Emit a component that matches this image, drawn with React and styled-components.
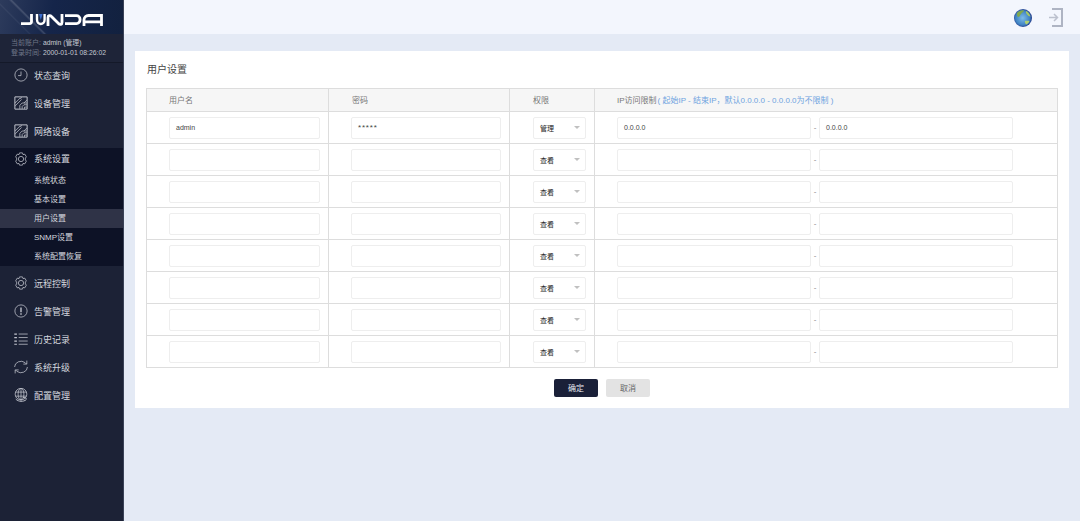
import React from "react";
import styled, { createGlobalStyle } from "styled-components";

const GlobalStyle = createGlobalStyle`
  html, body {
    margin: 0;
    padding: 0;
    height: 100%;
  }
  body {
    font-family: "Liberation Sans", "Noto Sans CJK SC", sans-serif;
    background: #e4eaf5;
  }
  * {
    box-sizing: border-box;
  }
`;

const Page = styled.div`
  display: flex;
  width: 1080px;
  height: 521px;
  overflow: hidden;
`;

const Sidebar = styled.aside`
  width: 124px;
  flex: none;
  background: #1c2236;
  border-right: 1px solid #3a4257;
  display: flex;
  flex-direction: column;
`;

const LogoBar = styled.div`
  height: 34px;
  padding: 6px 0 0 1px;
  display: flex;
  align-items: center;
  justify-content: center;
  background:
    linear-gradient(45deg, transparent 0 27%, rgba(255, 255, 255, 0.16) 28.500%, transparent 30%),
    linear-gradient(45deg, transparent 0 18%, rgba(255, 255, 255, 0.06) 19%, transparent 20%),
    linear-gradient(100deg, #2d3b5c 0%, #15254a 42%, #12213f 100%);
`;

const Account = styled.div`
  height: 29px;
  padding: 4px 0 0 11px;
  font-size: 7px;
  line-height: 10px;
  color: #6f7688;
  border-bottom: 1px solid #141929;
  background: #1e2438;

  b {
    font-size: 6.800px;
    font-weight: 400;
    color: #c4c8d2;
  }
`;

const MenuItem = styled.div`
  height: 24px;
  margin-bottom: 4px;
  display: flex;
  align-items: center;
  padding-left: 14px;
  gap: 6px;
  font-size: 9px;
  color: #d5d8df;

  svg {
    flex: none;
    width: 14px;
    height: 14px;
  }
`;

const Group = styled.div`
  margin: 1px 0 5px;
  background: #0d1226;
`;

const GroupTitle = styled(MenuItem)`
  height: 23px;
  margin-bottom: 0;
  padding-bottom: 2px;
`;

const SubItem = styled.div`
  height: 19px;
  padding: 0 0 2px 34px;
  display: flex;
  align-items: center;
  font-size: 8px;
  color: #d5d8df;
  background: ${(p) => (p.$active ? "#2f3347" : "transparent")};
`;

const Main = styled.main`
  flex: 1;
  min-width: 0;
  display: flex;
  flex-direction: column;
`;

const TopBar = styled.header`
  height: 34px;
  background: #f3f6fd;
  display: flex;
  align-items: center;
  justify-content: flex-end;
  gap: 17px;
  padding: 1px 17px 0 0;
`;

const Card = styled.section`
  margin: 17px 11px 0;
  height: 357px;
  background: #fff;
  padding: 12px 11px 0;
`;

const Title = styled.h2`
  margin: 0;
  height: 25px;
  padding-left: 1px;
  font-size: 10px;
  line-height: 14px;
  font-weight: 400;
  color: #444;
`;

const Table = styled.div`
  border: 1px solid #ddd;
  border-bottom: 0;
  width: 912px;
`;

const Row = styled.div`
  display: grid;
  grid-template-columns: 182px 181px 85px 1fr;
  height: 32px;
  border-bottom: 1px solid #ddd;
`;

const HeadRow = styled(Row)`
  height: 23px;
  background: #f6f6f6;
`;

const HeadCell = styled.div`
  display: flex;
  align-items: center;
  padding: 0 0 2px ${(p) => p.$indent}px;
  font-size: 8px;
  color: #777;
  border-right: ${(p) => (p.$last ? "0" : "1px solid #ddd")};
`;

const Hint = styled.span`
  color: #6ea3e0;
  margin-left: 1px;
`;

const Cell = styled.div`
  display: flex;
  align-items: center;
  padding-left: ${(p) => p.$indent}px;
  border-right: ${(p) => (p.$last ? "0" : "1px solid #ddd")};
`;

const Field = styled.div`
  width: ${(p) => p.$width}px;
  height: 22px;
  border: 1px solid #eeeeee;
  border-radius: 2px;
  background: #fff;
  display: flex;
  align-items: center;
  padding-left: 6px;
  font-size: 7px;
  color: #444;
`;

const PasswordField = styled(Field)`
  font-size: 8px;
  letter-spacing: 0.800px;
`;

const SelectBox = styled(Field)`
  justify-content: space-between;
  padding-right: 5px;
  color: #222;

  &::after {
    content: "";
    border-left: 3px solid transparent;
    border-right: 3px solid transparent;
    border-top: 3px solid #c0c0c0;
  }
`;

const Dash = styled.span`
  width: 8px;
  text-align: center;
  font-size: 8px;
  color: #888;
`;

const Actions = styled.div`
  display: flex;
  justify-content: center;
  gap: 8px;
  margin-top: 11px;
`;

const Button = styled.button`
  width: 44px;
  height: 18px;
  padding: 0 0 2px;
  border: 0;
  border-radius: 2px;
  font: inherit;
  font-size: 8px;
  background: ${(p) => (p.$primary ? "#1a2038" : "#e3e3e3")};
  color: ${(p) => (p.$primary ? "#e6e8ee" : "#666")};
`;

const Stroke = ({ children }) => (
  <svg viewBox="0 0 24 24" fill="none" stroke="#c2c5ce" strokeWidth="1.300" strokeLinejoin="round">
    {children}
  </svg>
);

const ClockIcon = () => (
  <Stroke>
    <circle cx="12" cy="12" r="10.500" />
    <path d="M12 6v7H7" />
  </Stroke>
);

const DeviceIcon = () => (
  <Stroke>
    <path d="M1.500 1.500h21v21h-21z" strokeWidth="1.700" />
    <path d="M2 12l9-9M2 17L13 6M10 22v-6l4-4h8M14 22v-4l3-3h5M18 22v-3h4M13 2l-2 3M17 12l5-5" />
  </Stroke>
);

const GearIcon = () => (
  <Stroke>
    <path d="M9.500 1.500h5l1 3 3-.8 2.500 4.300-2 4 2 4-2.500 4.300-3-.8-1 3h-5l-1-3-3 .8-2.500-4.300 2-4-2-4 2.500-4.300 3 .8z" />
    <circle cx="12" cy="12" r="4.500" />
  </Stroke>
);

const AlertIcon = () => (
  <Stroke>
    <circle cx="12" cy="12" r="10.500" />
    <path d="M12 6v8M12 16v2.500" strokeWidth="2.400" />
  </Stroke>
);

const ListIcon = () => (
  <Stroke>
    <path d="M8 3.500h15.500M8 9.500h15.500M8 15.500h15.500M8 21h15.500" />
    <path d="M.5 3.500h4.500M.5 9.500h4.500M.5 15.500h4.500M.5 21h4.500" strokeWidth="2" />
  </Stroke>
);

const SyncIcon = () => (
  <Stroke>
    <path d="M1 12A11 10 0 0 1 19 4.500l2.500 2.500M23 12A11 10 0 0 1 5 19.500L2.500 17" />
    <path d="M22 1v6h-6M2 23v-6h6" />
  </Stroke>
);

const GlobeGridIcon = () => (
  <Stroke>
    <circle cx="12" cy="10.500" r="10" />
    <ellipse cx="12" cy="10.500" rx="5" ry="10" />
    <path d="M2.500 7h19M2.500 14h19M12 .5v20" />
    <path d="M3 19c5 5 13 5 18 1M15 16c3 0 5 1 7 3" strokeWidth="1.600" />
  </Stroke>
);

const Logo = () => (
  <svg width="82" height="12" viewBox="0 0 82 12" fill="none" stroke="#fff" strokeWidth="2.800" role="img" aria-label="JUNDA">
    <path d="M0 9.600h8.500a2 2 0 0 0 2-2V0" />
    <path d="M18 0l1.800 6 1.800-6z" fill="#3d6fd0" stroke="none" />
    <path d="M16 0v5.500c0 3 2 4.500 3.800 4.500s3.800-1.500 3.800-4.500V0" strokeWidth="2.400" />
    <path d="M27 12V3.500c0-2 2-2.600 3.500-1l7 7c1.500 1.500 3.500 1 3.500-1V0" />
    <path d="M44 9.600h11.500a3.500 3.500 0 0 0 3.500-3.500v-1a3.500 3.500 0 0 0-3.500-3.500H44" />
    <path d="M63 12V6a4.500 4.500 0 0 1 4.500-4.500H80.500V12M64 7.800h16" />
  </svg>
);

const Earth = () => (
  <svg width="18" height="18" viewBox="0 0 18 18">
    <defs>
      <radialGradient id="sea" cx="48%" cy="50%" r="55%">
        <stop offset="0%" stopColor="#7dbce8" />
        <stop offset="72%" stopColor="#3f82c2" />
        <stop offset="100%" stopColor="#1b2478" />
      </radialGradient>
    </defs>
    <circle cx="9" cy="9" r="9" fill="url(#sea)" />
    <path d="M3 4c2-2 5-3 7-2.500-.5 1.500-2 2-3 3.500-1 1-1 2.500-2.500 3C3.500 8 2.500 6 3 4z" fill="#7fa850" />
    <path d="M12 2c2 .8 3.500 2.800 4.500 5.500-1.500 0-2.500-1-3.500-2-.5-1-1.500-1.500-1-3.500z" fill="#a6c864" />
    <path d="M11 12c1.500-.5 3-.5 4.500 0-.5 2-2 3-3.500 3.500-.5-1.200-1.500-2-1-3.500z" fill="#b0d070" />
  </svg>
);

const ExitIcon = () => (
  <svg width="14" height="19" viewBox="0 0 14 19" fill="none" stroke="#aeb4c3" strokeWidth="2">
    <path d="M3 1h10v17H3" />
    <path d="M0 9.500h8M5 6l3.500 3.500L5 13" strokeWidth="1.500" stroke="#bcc1ce" />
  </svg>
);

const topMenu = [
  ["状态查询", ClockIcon],
  ["设备管理", DeviceIcon],
  ["网络设备", DeviceIcon],
];

const subMenu = ["系统状态", "基本设置", "用户设置", "SNMP设置", "系统配置恢复"];

const bottomMenu = [
  ["远程控制", GearIcon],
  ["告警管理", AlertIcon],
  ["历史记录", ListIcon],
  ["系统升级", SyncIcon],
  ["配置管理", GlobeGridIcon],
];

const users = [
  { name: "admin", password: "*****", role: "管理", from: "0.0.0.0", to: "0.0.0.0" },
  ...Array.from({ length: 7 }, () => ({ name: "", password: "", role: "查看", from: "", to: "" })),
];

export default function App() {
  return (
    <Page>
      <GlobalStyle />
      <Sidebar>
        <LogoBar>
          <Logo />
        </LogoBar>
        <Account>
          <div>
            当前账户: <b>admin (管理)</b>
          </div>
          <div>
            登录时间: <b>2000-01-01 08:26:02</b>
          </div>
        </Account>
        {topMenu.map(([label, Icon]) => (
          <MenuItem key={label}>
            <Icon />
            {label}
          </MenuItem>
        ))}
        <Group>
          <GroupTitle>
            <GearIcon />
            系统设置
          </GroupTitle>
          {subMenu.map((label) => (
            <SubItem key={label} $active={label === "用户设置"}>
              {label}
            </SubItem>
          ))}
        </Group>
        {bottomMenu.map(([label, Icon]) => (
          <MenuItem key={label}>
            <Icon />
            {label}
          </MenuItem>
        ))}
      </Sidebar>
      <Main>
        <TopBar>
          <Earth />
          <ExitIcon />
        </TopBar>
        <Card>
          <Title>用户设置</Title>
          <Table>
            <HeadRow>
              <HeadCell $indent={22}>用户名</HeadCell>
              <HeadCell $indent={23}>密码</HeadCell>
              <HeadCell $indent={23}>权限</HeadCell>
              <HeadCell $indent={22} $last>
                IP访问限制
                <Hint>( 起始IP - 结束IP，默认0.0.0.0 - 0.0.0.0为不限制 )</Hint>
              </HeadCell>
            </HeadRow>
            {users.map((user, i) => (
              <Row key={i}>
                <Cell $indent={22}>
                  <Field $width={151}>{user.name}</Field>
                </Cell>
                <Cell $indent={22}>
                  <PasswordField $width={150}>{user.password}</PasswordField>
                </Cell>
                <Cell $indent={23}>
                  <SelectBox $width={53}>{user.role}</SelectBox>
                </Cell>
                <Cell $indent={22} $last>
                  <Field $width={194}>{user.from}</Field>
                  <Dash>-</Dash>
                  <Field $width={194}>{user.to}</Field>
                </Cell>
              </Row>
            ))}
          </Table>
          <Actions>
            <Button $primary>确定</Button>
            <Button>取消</Button>
          </Actions>
        </Card>
      </Main>
    </Page>
  );
}
